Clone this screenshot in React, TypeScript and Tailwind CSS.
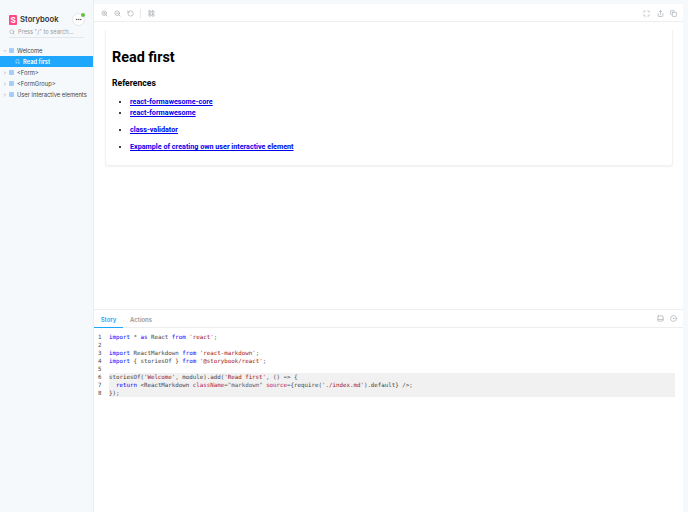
import { ChevronRight, ChevronDown, Search, ZoomIn, ZoomOut, RotateCcw, LayoutGrid, Maximize, Share, Copy, PanelBottom, CircleDot, Bookmark, Ellipsis } from "lucide-react";

const navItems = ["<Form>", "<FormGroup>", "User interactive elements"];

const Folder = () => <div className="w-[5px] h-[5px] rounded-[1px] bg-[#a4cdf8]" />;

const Sidebar = () => (
  <aside className="w-[94px] shrink-0 bg-[#f6f9fc] border-r border-[#e9edf1] font-['Inter',sans-serif]">
    <div className="flex items-center pl-[9px] pr-[8px] pt-[9px] h-[21px] box-content">
      <div className="w-[8px] h-[10px] rounded-[1px] bg-[#ff4785] text-white text-[8px] font-bold leading-[10px] text-center">S</div>
      <span className="ml-[3px] text-[7.7px] font-semibold text-[#333] leading-none">Storybook</span>
      <div className="relative ml-auto w-[13px] h-[13px] rounded-full bg-white border border-[#e5e7eb] flex items-center justify-center">
        <Ellipsis size={7} strokeWidth={3} className="text-[#555]" />
        <div className="absolute -top-[1px] -right-[1px] w-[4px] h-[4px] rounded-full bg-[#66bf3c]" />
      </div>
    </div>
    <div className="mx-[9px] -mt-[2px] h-[8px] pb-[1px] box-content flex items-center gap-[3px] border-b border-[#e3e7eb]">
      <Search size={6} className="text-[#999]" />
      <span className="text-[5.7px] text-[#999] leading-none">Press "/" to search...</span>
    </div>
    <div className="mt-[7px]">
      <div className="h-[11px] flex items-center pl-[3px] gap-[2px]">
        <ChevronDown size={4} strokeWidth={3} className="text-[#888]" />
        <Folder />
        <span className="ml-[1px] text-[5.8px] text-[#444] leading-none">Welcome</span>
      </div>
      <div className="h-[11px] flex items-center pl-[15px] gap-[2px] bg-[#1ea7fd] text-white">
        <Bookmark size={5} strokeWidth={2} />
        <span className="ml-[1px] text-[5.8px] font-semibold leading-none">Read first</span>
      </div>
      {navItems.map((item) => (
        <div key={item} className="h-[11px] flex items-center pl-[3px] gap-[2px]">
          <ChevronRight size={4} strokeWidth={3} className="text-[#888]" />
          <Folder />
          <span className="ml-[1px] text-[5.8px] text-[#444] leading-none whitespace-nowrap">{item}</span>
        </div>
      ))}
    </div>
  </aside>
);

const Toolbar = () => (
  <div className="h-[18px] shrink-0 flex items-center bg-white border-b border-[#eceef0] pl-[7px] pr-[6px] pt-[1px] text-[#9aa0a6]">
    <div className="flex items-center gap-[6px]">
      <ZoomIn size={7} />
      <ZoomOut size={7} />
      <RotateCcw size={7} />
    </div>
    <div className="w-px h-[9px] bg-[#e8e8e8] ml-[6px] mr-[7px]" />
    <LayoutGrid size={7} />
    <div className="ml-auto flex items-center gap-[6.5px]">
      <Maximize size={7} />
      <Share size={7} />
      <Copy size={7} />
    </div>
  </div>
);

const links = [
  { label: "react-formawesome-core", mt: "mt-0" },
  { label: "react-formawesome", mt: "mt-[1px]" },
  { label: "class-validator", mt: "mt-[7px]" },
  { label: "Expample of creating own user interactive element", mt: "mt-[7px]" },
];

const Preview = () => (
  <div className="h-[287px] shrink-0 bg-white pl-[11px] pr-[10px] pt-[8px]">
    <div className="h-[136px] rounded-b-[3px] bg-white shadow-[0_1px_2px_rgba(0,0,0,0.06)] border-x border-b border-[#f2f2f2] pl-[6px] pt-[17px] font-['Roboto',sans-serif] text-black">
      <h1 className="text-[14.4px] font-bold leading-[21px]">Read first</h1>
      <h2 className="mt-[9px] text-[8.6px] font-bold leading-[12px]">References</h2>
      <ul className="mt-[8px] pl-[18px] list-disc text-[7.2px] font-bold leading-[10px]">
        {links.map((link) => (
          <li key={link.label} className={link.mt}>
            <a href="#" className="text-[#0000ee] underline">{link.label}</a>
          </li>
        ))}
      </ul>
    </div>
  </div>
);

const Kw = ({ children }: { children: string }) => <span className="text-[#0000ff]">{children}</span>;
const Str = ({ children }: { children: string }) => <span className="text-[#a31515]">{children}</span>;
const Attr = ({ children }: { children: string }) => <span className="text-[#c01a3a]">{children}</span>;

const Code = () => (
  <div className="flex pt-[5px] pl-[4px] pr-[8px] font-['DejaVu_Sans_Mono',monospace] text-[5.8px] leading-[8px] text-[#444]">
    <div className="w-[11px] shrink-0 text-[#444]">
      {[1, 2, 3, 4, 5, 6, 7, 8].map((n) => (
        <div key={n} className="h-[8px]">{n}</div>
      ))}
    </div>
    <div className="flex-1 whitespace-pre">
      <div className="h-[8px]"><Kw>import</Kw> * <Kw>as</Kw> React <Kw>from</Kw> <Str>'react'</Str>;</div>
      <div className="h-[8px]" />
      <div className="h-[8px]"><Kw>import</Kw> ReactMarkdown <Kw>from</Kw> <Str>'react-markdown'</Str>;</div>
      <div className="h-[8px]"><Kw>import</Kw> {"{ storiesOf }"} <Kw>from</Kw> <Str>'@storybook/react'</Str>;</div>
      <div className="h-[8px]" />
      <div className="bg-[#f1f1f1]">
        <div className="h-[8px]">storiesOf(<Str>'Welcome'</Str>, module).add(<Str>'Read first'</Str>, () =&gt; {"{"}</div>
        <div className="h-[8px]">  <Kw>return</Kw> &lt;<span className="text-[#445]">ReactMarkdown</span> <Attr>className</Attr>=<span className="text-[#556]">"markdown"</span> <Attr>source</Attr>={"{"}require(<Str>'./index.md'</Str>).default{"}"} /&gt;;</div>
        <div className="h-[8px]">{"});"}</div>
      </div>
    </div>
  </div>
);

const Panel = () => (
  <div className="flex-1 bg-white border-t border-[#eceef0] font-['Inter',sans-serif]">
    <div className="h-[18px] flex items-center border-b border-[#eceef0] pr-[6px]">
      <div className="h-[18px] w-[29px] pt-[2px] flex items-center justify-center text-[6px] font-semibold text-[#1ea7fd] border-b border-[#1ea7fd]">Story</div>
      <div className="ml-[7px] pt-[2px] text-[6px] font-semibold text-[#999]">Actions</div>
      <div className="ml-auto flex items-center gap-[6px] text-[#9aa0a6]">
        <PanelBottom size={7} />
        <CircleDot size={7} />
      </div>
    </div>
    <Code />
  </div>
);

export default function App() {
  return (
    <div className="w-[688px] h-[512px] flex overflow-hidden bg-[#f6f9fc]">
      <Sidebar />
      <main className="flex-1 min-w-0 flex flex-col pt-[4px] pr-[5px]">
        <Toolbar />
        <Preview />
        <Panel />
      </main>
    </div>
  );
}
